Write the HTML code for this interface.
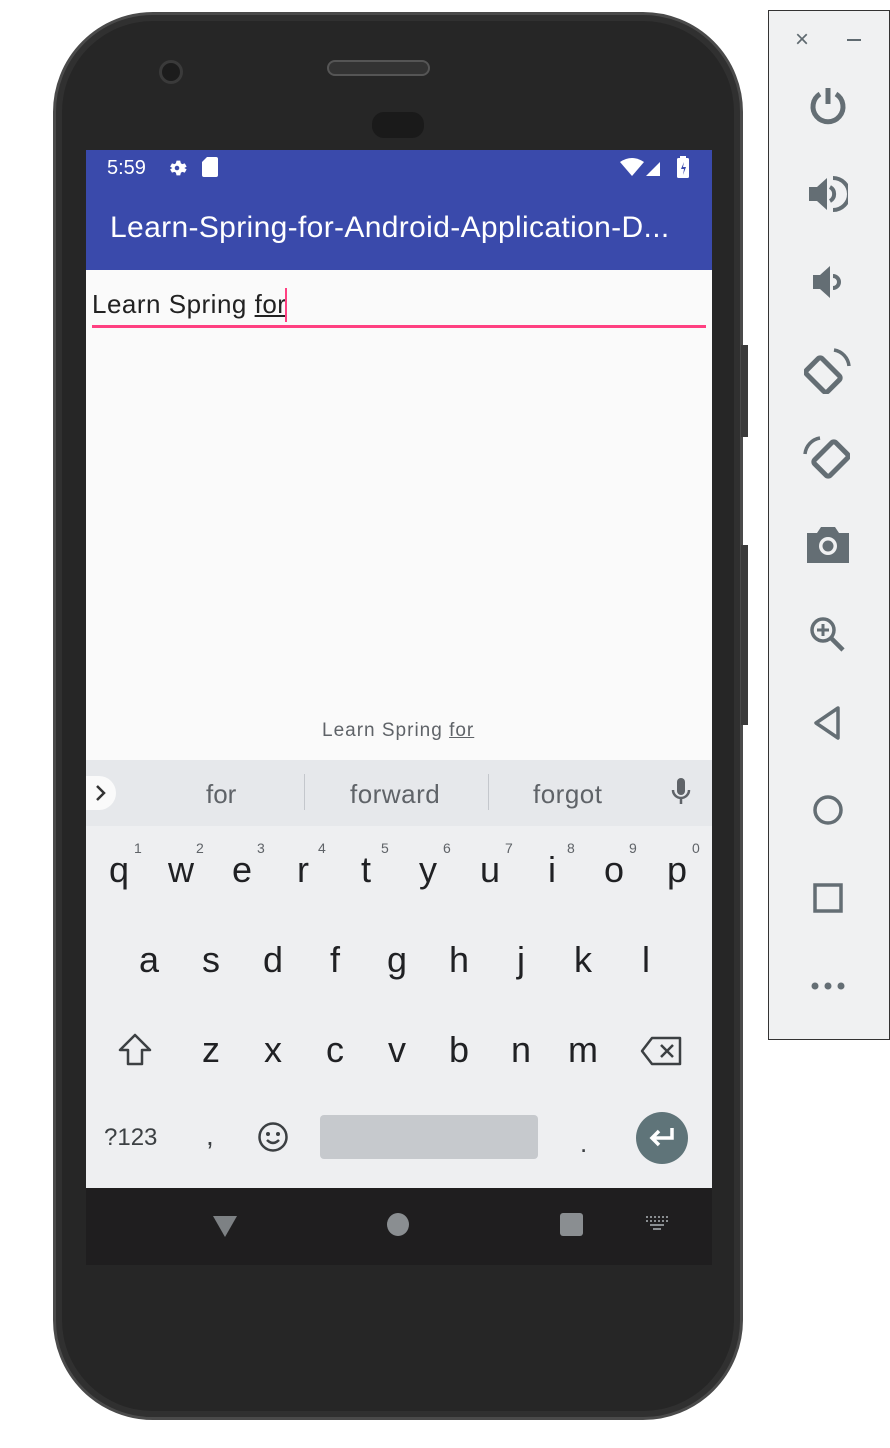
<!DOCTYPE html>
<html><head><meta charset="utf-8"><style>
*{margin:0;padding:0;box-sizing:border-box}
body{width:890px;height:1448px;background:#fff;position:relative;overflow:hidden;font-family:"Liberation Sans",sans-serif}
.a{position:absolute}
.phone{left:53px;top:12px;width:690px;height:1408px;background:#262626;border:3px solid #4a4a4a;border-radius:100px;box-shadow:inset 0 0 0 6px #303030}
.k{position:absolute;font-size:36px;color:#202124;transform:translateX(-50%);line-height:1}
.n{position:absolute;font-size:14px;color:#5f6368;line-height:1}
.side{left:768px;top:10px;width:122px;height:1030px;background:#f0f1f2;border:1px solid #333}
</style></head><body>
<div class="a phone"></div>
<div class="a" style="left:159px;top:60px;width:24px;height:24px;border-radius:50%;background:#1c1c1c;border:3px solid #3a3a3a"></div>
<div class="a" style="left:327px;top:60px;width:103px;height:16px;border-radius:8px;background:#333;border:2px solid #555"></div>
<div class="a" style="left:372px;top:112px;width:52px;height:26px;border-radius:12px;background:#1a1a1a"></div>
<div class="a" style="left:86px;top:150px;width:626px;height:120px;background:#3a4aab"></div>
<div class="a" style="left:107px;top:157px;color:#fff;font-size:20px">5:59</div>
<svg class="a" style="left:166px;top:157px" width="22" height="22" viewBox="0 0 24 24"><path fill="#fff" d="M12 8a4 4 0 100 8 4 4 0 000-8zm8 4l2.5-1.5-2-3.5-2.8.8-1.5-1L15.5 4h-4l-.7 2.8-1.5 1L6.5 7 4.5 10.5 7 12l-2.5 1.5 2 3.5 2.8-.8 1.5 1 .7 2.8h4l.7-2.8 1.5-1 2.8.8 2-3.5z"/><circle cx="12" cy="12" r="2.5" fill="#3a4aab"/></svg>
<svg class="a" style="left:202px;top:157px" width="16" height="20"><path fill="#fff" d="M5 0h9a2 2 0 012 2v16a2 2 0 01-2 2H2a2 2 0 01-2-2V5z"/></svg>
<svg class="a" style="left:620px;top:158px" width="48" height="20"><path fill="#fff" d="M0 4Q12-4 24 4L12 18z"/><path fill="#fff" d="M26 18L40 4V18z"/></svg>
<svg class="a" style="left:677px;top:156px" width="14" height="22"><rect x="0" y="2" width="12" height="20" rx="1.5" fill="#fff"/><rect x="3" y="0" width="6" height="3" fill="#fff"/><path d="M7 6L4 13h3l-1 6 3-8H6z" fill="#3a4aab"/></svg>
<div class="a" style="left:110px;top:211px;color:#fff;font-size:30px;letter-spacing:0.35px;white-space:nowrap">Learn-Spring-for-Android-Application-D...</div>
<div class="a" style="left:86px;top:270px;width:626px;height:490px;background:#fafafa"></div>
<div class="a" style="left:92px;top:289px;font-size:26px;color:#222;letter-spacing:0.5px;white-space:nowrap">Learn Spring <span style="text-decoration:underline">for</span></div>
<div class="a" style="left:285px;top:288px;width:2px;height:34px;background:#ff4081"></div>
<div class="a" style="left:92px;top:325px;width:614px;height:3px;background:#ff4081"></div>
<div class="a" style="left:322px;top:720px;font-size:19px;color:#5f6368;letter-spacing:1px;white-space:nowrap">Learn Spring <span style="text-decoration:underline">for</span></div>
<div class="a" style="left:86px;top:760px;width:626px;height:66px;background:#e6e8eb"></div>
<div class="a" style="left:86px;top:776px;width:30px;height:34px;background:#fafafa;border-radius:0 17px 17px 0"></div>
<svg class="a" style="left:94px;top:784px" width="14" height="18"><path d="M3 2l7 7-7 7" stroke="#333" stroke-width="2.5" fill="none"/></svg>
<div class="a" style="left:206px;top:779px;font-size:26px;color:#5f6368">for</div>
<div class="a" style="left:304px;top:774px;width:1px;height:36px;background:#c4c7cc"></div>
<div class="a" style="left:350px;top:779px;font-size:26px;color:#5f6368;letter-spacing:0.5px">forward</div>
<div class="a" style="left:488px;top:774px;width:1px;height:36px;background:#c4c7cc"></div>
<div class="a" style="left:533px;top:779px;font-size:26px;color:#5f6368;letter-spacing:0.5px">forgot</div>
<svg class="a" style="left:670px;top:778px" width="22" height="30"><rect x="7" y="0" width="8" height="17" rx="4" fill="#5f6368"/><path d="M3 12a8 8 0 0016 0M11 20v6" stroke="#5f6368" stroke-width="2.5" fill="none"/></svg>
<div class="a" style="left:86px;top:826px;width:626px;height:362px;background:#eeeff1"></div>
<div class="k" style="left:119px;top:852px">q</div><div class="k" style="left:181px;top:852px">w</div><div class="k" style="left:242px;top:852px">e</div><div class="k" style="left:303px;top:852px">r</div><div class="k" style="left:366px;top:852px">t</div><div class="k" style="left:428px;top:852px">y</div><div class="k" style="left:490px;top:852px">u</div><div class="k" style="left:552px;top:852px">i</div><div class="k" style="left:614px;top:852px">o</div><div class="k" style="left:677px;top:852px">p</div>
<div class="n" style="left:134px;top:841px">1</div><div class="n" style="left:196px;top:841px">2</div><div class="n" style="left:257px;top:841px">3</div><div class="n" style="left:318px;top:841px">4</div><div class="n" style="left:381px;top:841px">5</div><div class="n" style="left:443px;top:841px">6</div><div class="n" style="left:505px;top:841px">7</div><div class="n" style="left:567px;top:841px">8</div><div class="n" style="left:629px;top:841px">9</div><div class="n" style="left:692px;top:841px">0</div>
<div class="k" style="left:149px;top:942px">a</div><div class="k" style="left:211px;top:942px">s</div><div class="k" style="left:273px;top:942px">d</div><div class="k" style="left:335px;top:942px">f</div><div class="k" style="left:397px;top:942px">g</div><div class="k" style="left:459px;top:942px">h</div><div class="k" style="left:521px;top:942px">j</div><div class="k" style="left:583px;top:942px">k</div><div class="k" style="left:646px;top:942px">l</div>
<svg class="a" style="left:116px;top:1032px" width="38" height="36"><path d="M19 3L4 18h8v14h14V18h8z" stroke="#3c4043" stroke-width="2.5" fill="none" stroke-linejoin="round"/></svg>
<div class="k" style="left:211px;top:1032px">z</div><div class="k" style="left:273px;top:1032px">x</div><div class="k" style="left:335px;top:1032px">c</div><div class="k" style="left:397px;top:1032px">v</div><div class="k" style="left:459px;top:1032px">b</div><div class="k" style="left:521px;top:1032px">n</div><div class="k" style="left:583px;top:1032px">m</div>
<svg class="a" style="left:640px;top:1036px" width="42" height="30"><path d="M12 2h28v26H12L2 15z" stroke="#3c4043" stroke-width="2.5" fill="none" stroke-linejoin="round"/><path d="M21 9l12 12M33 9L21 21" stroke="#3c4043" stroke-width="2.5"/></svg>
<div class="a" style="left:104px;top:1124px;font-size:24px;color:#3c4043">?123</div>
<div class="a" style="left:206px;top:1120px;font-size:28px;color:#3c4043">,</div>
<svg class="a" style="left:257px;top:1121px" width="32" height="32"><circle cx="16" cy="16" r="13.5" stroke="#3c4043" stroke-width="2.5" fill="none"/><circle cx="11" cy="13" r="2" fill="#3c4043"/><circle cx="21" cy="13" r="2" fill="#3c4043"/><path d="M10 19q6 6 12 0" stroke="#3c4043" stroke-width="2.5" fill="none"/></svg>
<div class="a" style="left:320px;top:1115px;width:218px;height:44px;background:#c6c9cd;border-radius:4px"></div>
<div class="a" style="left:580px;top:1128px;font-size:26px;color:#3c4043">.</div>
<div class="a" style="left:636px;top:1112px;width:52px;height:52px;border-radius:50%;background:#5f7479"></div>
<svg class="a" style="left:646px;top:1124px" width="32" height="28"><path d="M26 4v10H7M13 7l-7 7 7 7" stroke="#fff" stroke-width="3.5" fill="none"/></svg>
<div class="a" style="left:86px;top:1188px;width:626px;height:77px;background:#1f1e1f"></div>
<svg class="a" style="left:212px;top:1214px" width="26" height="24"><path d="M1 2h24L13 23z" fill="#7d8184"/></svg>
<div class="a" style="left:387px;top:1213px;width:22px;height:23px;border-radius:50%;background:#8a8e91"></div>
<div class="a" style="left:560px;top:1213px;width:23px;height:23px;border-radius:3px;background:#8a8e91"></div>
<svg class="a" style="left:646px;top:1216px" width="26" height="16"><g fill="#8a8e91"><rect x="0" y="0" width="2" height="2"/><rect x="4" y="0" width="2" height="2"/><rect x="8" y="0" width="2" height="2"/><rect x="12" y="0" width="2" height="2"/><rect x="16" y="0" width="2" height="2"/><rect x="20" y="0" width="2" height="2"/><rect x="0" y="4" width="2" height="2"/><rect x="4" y="4" width="2" height="2"/><rect x="8" y="4" width="2" height="2"/><rect x="12" y="4" width="2" height="2"/><rect x="16" y="4" width="2" height="2"/><rect x="20" y="4" width="2" height="2"/><rect x="4" y="8" width="14" height="2"/><rect x="7" y="12" width="8" height="2"/></g></svg>
<div class="a" style="left:741px;top:345px;width:7px;height:92px;background:#3a3a3a"></div>
<div class="a" style="left:741px;top:545px;width:7px;height:180px;background:#3a3a3a"></div>
<div class="a side"></div>
<div class="a" style="left:795px;top:26px;font-size:24px;color:#5f6a70">×</div>
<div class="a" style="left:847px;top:39px;width:14px;height:2px;background:#5f6a70"></div>
<svg class="a" style="left:808px;top:86px" width="40" height="40"><path d="M12 8a15 15 0 1016 0" stroke="#646e74" stroke-width="5" fill="none"/><path d="M20 2v16" stroke="#646e74" stroke-width="5"/></svg>
<svg class="a" style="left:808px;top:174px" width="40" height="40"><path d="M1 13h8l10-9v32L9 27H1z" fill="#646e74"/><path d="M22 13a8 8 0 010 14" stroke="#646e74" stroke-width="4" fill="none"/><path d="M25 4a16 16 0 010 32" stroke="#646e74" stroke-width="4" fill="none"/></svg>
<svg class="a" style="left:812px;top:264px" width="32" height="36"><path d="M1 11h7l10-9v32L8 25H1z" fill="#646e74"/><path d="M21 12a6 6 0 010 12" stroke="#646e74" stroke-width="4" fill="none"/></svg>
<svg class="a" style="left:804px;top:346px" width="48" height="48"><rect x="8" y="14" width="22" height="30" rx="3" transform="rotate(-45 19 29)" stroke="#646e74" stroke-width="5" fill="none"/><path d="M30 4a18 18 0 0115 16" stroke="#646e74" stroke-width="3.5" fill="none"/></svg>
<svg class="a" style="left:802px;top:434px" width="48" height="48"><rect x="18" y="10" width="22" height="30" rx="3" transform="rotate(45 29 25)" stroke="#646e74" stroke-width="5" fill="none"/><path d="M18 4a18 18 0 00-15 16" stroke="#646e74" stroke-width="3.5" fill="none"/></svg>
<svg class="a" style="left:807px;top:525px" width="42" height="38"><path d="M0 8h10l4-6h14l4 6h10v30H0z" fill="#646e74"/><circle cx="21" cy="21" r="9" fill="#f0f1f2"/><circle cx="21" cy="21" r="5.5" fill="#646e74"/></svg>
<svg class="a" style="left:808px;top:615px" width="38" height="38"><circle cx="15" cy="15" r="11" stroke="#646e74" stroke-width="3.5" fill="none"/><path d="M23 23l12 12" stroke="#646e74" stroke-width="4.5"/><path d="M15 9v12M9 15h12" stroke="#646e74" stroke-width="3"/></svg>
<svg class="a" style="left:812px;top:705px" width="32" height="36"><path d="M26 3L4 18l22 15z" stroke="#646e74" stroke-width="3.5" fill="none" stroke-linejoin="round"/></svg>
<svg class="a" style="left:812px;top:794px" width="32" height="32"><circle cx="16" cy="16" r="13" stroke="#646e74" stroke-width="3.5" fill="none"/></svg>
<svg class="a" style="left:813px;top:883px" width="30" height="30"><rect x="2" y="2" width="26" height="26" stroke="#646e74" stroke-width="3.5" fill="none"/></svg>
<svg class="a" style="left:810px;top:980px" width="36" height="12"><circle cx="5" cy="6" r="3.5" fill="#646e74"/><circle cx="18" cy="6" r="3.5" fill="#646e74"/><circle cx="31" cy="6" r="3.5" fill="#646e74"/></svg>
</body></html>
